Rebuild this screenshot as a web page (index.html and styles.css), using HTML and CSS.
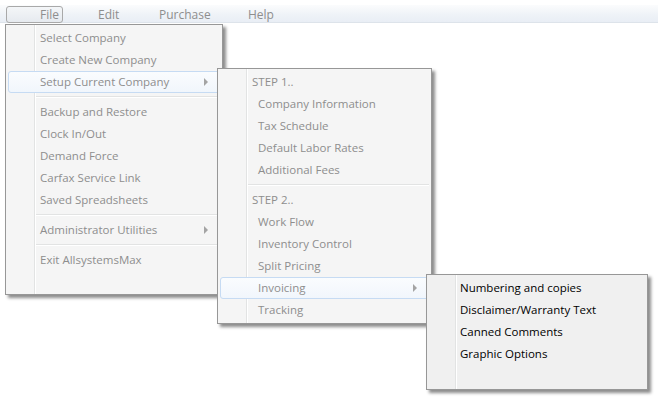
FILE: index.html
```html
<!DOCTYPE html>
<html>
<head>
<meta charset="utf-8">
<link rel="stylesheet" href="styles.css">
</head>
<body>
<div class="menubar">
  <div class="mb-item mb-file"><span class="mb-btn">File</span></div>
  <div class="mb-item mb-edit">Edit</div>
  <div class="mb-item mb-purchase">Purchase</div>
  <div class="mb-item mb-help">Help</div>
</div>

<div class="menu menu-main">
  <div class="item">Select Company</div>
  <div class="item">Create New Company</div>
  <div class="item active has-sub">Setup Current Company<span class="arrow"></span></div>
  <div class="sep"></div>
  <div class="item">Backup and Restore</div>
  <div class="item">Clock In/Out</div>
  <div class="item">Demand Force</div>
  <div class="item">Carfax Service Link</div>
  <div class="item">Saved Spreadsheets</div>
  <div class="sep"></div>
  <div class="item has-sub">Administrator Utilities<span class="arrow"></span></div>
  <div class="sep"></div>
  <div class="item">Exit AllsystemsMax</div>
  <div class="item blank"></div>
</div>

<div class="menu menu-setup">
  <div class="item">STEP 1..</div>
  <div class="item indent">Company Information</div>
  <div class="item indent">Tax Schedule</div>
  <div class="item indent">Default Labor Rates</div>
  <div class="item indent">Additional Fees</div>
  <div class="sep"></div>
  <div class="item">STEP 2..</div>
  <div class="item indent">Work Flow</div>
  <div class="item indent">Inventory Control</div>
  <div class="item indent">Split Pricing</div>
  <div class="item indent active has-sub">Invoicing<span class="arrow"></span></div>
  <div class="item indent">Tracking</div>
</div>

<div class="menu menu-invoice">
  <div class="item">Numbering and copies</div>
  <div class="item">Disclaimer/Warranty Text</div>
  <div class="item">Canned Comments</div>
  <div class="item">Graphic Options</div>
  <div class="item blank"></div>
</div>
</body>
</html>
```

FILE: styles.css
```css
html, body {
  margin: 0;
  padding: 0;
  background: #ffffff;
  font-family: "Open Sans", "Noto Sans", sans-serif;
  font-size: 11.5px;
  color: #8e8e8e;
}

.menubar {
  margin-top: 5px;
  width: 658px;
  height: 18px;
  display: flex;
  align-items: stretch;
  background: linear-gradient(to bottom, #fbfcfd 0%, #eef2f7 60%, #e9eef5 100%);
  border-bottom: 1px solid #dde3ea;
  box-sizing: border-box;
  font-size: 12px;
}

.mb-item {
  line-height: 19px;
  box-sizing: border-box;
  white-space: nowrap;
}

.mb-file {
  width: 63px;
  padding-left: 6px;
  padding-top: 1px;
}

.mb-btn {
  display: block;
  width: 57px;
  height: 17px;
  line-height: 15px;
  box-sizing: border-box;
  padding-left: 33px;
  border: 1px solid #a9a9a9;
  border-radius: 3px;
  background: linear-gradient(to bottom, #f4f6f8, #e6eaef);
}

.mb-edit { width: 60px; padding-left: 35px; }
.mb-purchase { width: 89px; padding-left: 36px; }
.mb-help { padding-left: 36px; }

.menu {
  position: absolute;
  box-sizing: border-box;
  border: 1px solid #979797;
  padding: 2px;
  background-color: #f5f5f5;
  background-image: linear-gradient(to right, transparent 28px, #e2e3e3 28px, #e2e3e3 29px, #ffffff 29px, #ffffff 30px, transparent 30px);
  box-shadow: 3px 3px 3px rgba(0, 0, 0, 0.45);
}

.menu-main { left: 5px; top: 24px; width: 218px; height: 271px; }
.menu-setup { left: 217px; top: 68px; width: 215px; height: 256px; }
.menu-invoice {
  left: 426px; top: 274px; width: 222px; height: 116px;
  background-color: #f0f0f0;
  color: #000000;
}

.item {
  height: 22px;
  line-height: 20px;
  padding-left: 31px;
  padding-bottom: 1px;
  box-sizing: border-box;
  white-space: nowrap;
  border: 1px solid transparent;
  border-radius: 3px;
  display: flex;
  align-items: center;
}

.menu-invoice .item { padding-left: 30px; }

.item.indent { padding-left: 37px; }

.item.active {
  border-color: #c6dbf3;
  background: linear-gradient(to bottom, #fafcfe 0%, #f1f6fc 100%);
}

.item.has-sub { justify-content: space-between; padding-right: 11px; }

.arrow {
  width: 0;
  height: 0;
  border-top: 4px solid transparent;
  border-bottom: 4px solid transparent;
  border-left: 4px solid #a4a4a4;
}

.sep {
  height: 0;
  margin: 3px 0 3px 28px;
  border-top: 1px solid #e2e3e3;
  border-bottom: 1px solid #ffffff;
}
```
